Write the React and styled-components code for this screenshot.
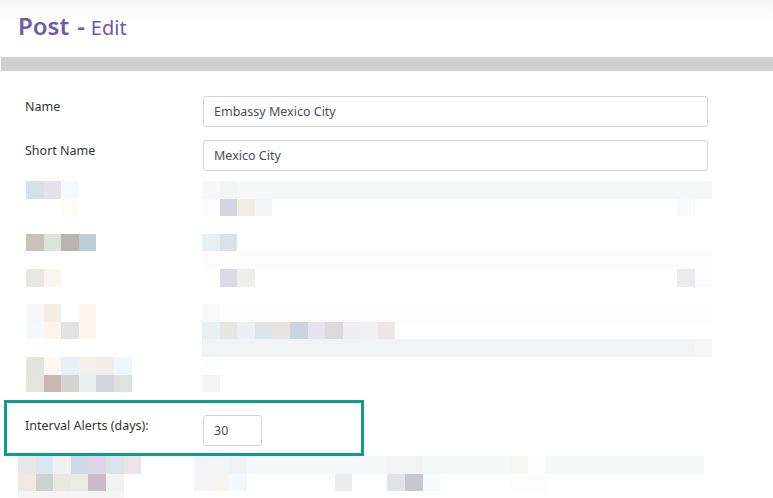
import React from "react";
import styled, { createGlobalStyle } from "styled-components";

const GlobalStyle = createGlobalStyle`
  html, body {
    margin: 0;
    padding: 0;
    background: #fff;
  }
  body {
    font-family: "Noto Sans", "Open Sans", sans-serif;
    color: #333;
  }
`;

const CELL = 17.6;

const Page = styled.div`
  width: 773px;
  height: 498px;
  overflow: hidden;
  background: #fff;
`;

const Header = styled.header`
  height: 57px;
  padding: 0 18px;
  display: flex;
  align-items: flex-start;
  background: linear-gradient(#f6f6f6, #fff 22px);
`;

const Title = styled.h1`
  margin: 10px 0 0;
  display: flex;
  align-items: baseline;
  font-family: "Noto Sans", sans-serif;
  font-size: 24px;
  font-weight: 600;
  line-height: 32px;
  color: #6d5aa8;
`;

const Dash = styled.span`
  margin: 0 6px 0 8px;
`;

const SubTitle = styled.span`
  font-size: 20px;
  font-weight: 400;
`;

const Divider = styled.div`
  height: 14px;
  margin-left: 1px;
  background: #d0d0d0;
`;

const Form = styled.div`
  padding-top: 25px;
  display: flex;
  flex-direction: column;
`;

const FormRow = styled.div`
  display: flex;
  align-items: flex-start;
  padding-left: 25px;
  margin-bottom: ${({ gap }) => gap}px;
`;

const Label = styled.label`
  width: 178px;
  flex-shrink: 0;
  padding-top: 1px;
  font-size: 12.5px;
  line-height: 20px;
  color: #333;
`;

const TextInput = styled.div`
  box-sizing: border-box;
  width: ${({ width }) => width}px;
  height: 31px;
  padding: 0 10px;
  display: flex;
  align-items: center;
  border: 1px solid #cfd3da;
  border-radius: 3px;
  font-size: 12.5px;
  color: #4b4b5c;
  background: #fff;
`;

const Mosaic = styled.div`
  display: grid;
  grid-template-columns: repeat(40, ${CELL}px);
  grid-auto-rows: ${CELL}px;
  margin-left: ${({ left }) => left}px;
  height: ${({ rows }) => rows * CELL}px;
  overflow: hidden;
`;

const Cell = styled.div`
  background: ${({ color }) => color};
`;

const Highlight = styled.div`
  margin: 8px 0 0 4px;
  width: 360px;
  box-sizing: border-box;
  border: 3px solid #119c88;
  padding: 12px 0 7px 18px;
  display: flex;
  align-items: flex-start;
`;

// [row, col, span, color]
const topMosaic = [
  [0, 0, 1, "#d6e0ea"], [0, 1, 1, "#e6e0ea"], [0, 2, 1, "#f5faff"],
  [0, 10, 1, "#f8f8fa"], [0, 11, 1, "#f3f4f6"], [0, 12, 27, "#f7f8fa"],
  [1, 2, 1, "#fffdf8"], [1, 10, 1, "#fcfcfc"], [1, 11, 1, "#d4d4e2"],
  [1, 12, 1, "#f0ede6"], [1, 13, 1, "#f5f5f5"], [1, 37, 1, "#fafafa"],
  [3, 0, 1, "#c8c2bc"], [3, 1, 1, "#dce2dc"], [3, 2, 1, "#bab4b0"], [3, 3, 1, "#bccfd8"],
  [3, 10, 1, "#e6f0f2"], [3, 11, 1, "#dce0e8"],
  [4, 10, 29, "#fcfcfc"],
  [5, 0, 1, "#e8e8e2"], [5, 1, 1, "#f8f6ee"], [5, 11, 1, "#dcdae8"], [5, 12, 1, "#eeefec"],
  [5, 37, 1, "#ebebed"], [5, 38, 1, "#fbfcfb"],
  [7, 0, 1, "#f7f8f7"], [7, 1, 1, "#f4eee6"], [7, 3, 1, "#fff6ee"],
  [7, 10, 1, "#f9f9f9"], [7, 11, 28, "#fcfcfc"],
  [8, 0, 1, "#f5faff"], [8, 1, 1, "#fff4ec"], [8, 2, 1, "#e2e2e2"], [8, 3, 1, "#fff5ee"],
  [8, 10, 1, "#e8f0f4"], [8, 11, 1, "#e8e6e2"], [8, 12, 1, "#ecf0f4"], [8, 13, 1, "#dce6e8"],
  [8, 14, 1, "#e6e4e2"], [8, 15, 1, "#ccd4dc"], [8, 16, 1, "#e6e4f0"], [8, 17, 1, "#dcdadc"],
  [8, 18, 1, "#eeeef2"], [8, 19, 1, "#f0eff2"], [8, 20, 1, "#ece6e6"],
  [9, 10, 28, "#f2f3f5"], [9, 38, 1, "#f6f6f8"],
  [10, 0, 1, "#e4e4de"], [10, 1, 1, "#fdf8f2"], [10, 2, 1, "#e8f0f8"],
  [10, 3, 1, "#f4f0ea"], [10, 4, 1, "#f2eeea"], [10, 5, 1, "#eef6fe"], [10, 10, 1, "#fdfefe"],
  [11, 0, 1, "#e6e4dc"], [11, 1, 1, "#cab6b2"], [11, 2, 1, "#d4d4d2"],
  [11, 3, 1, "#e8f2f0"], [11, 4, 1, "#d4d4e0"], [11, 5, 1, "#e0e2e0"], [11, 10, 1, "#f4f4f4"],
];

const bottomMosaic = [
  [0, 0, 1, "#e8e8ec"], [0, 1, 1, "#dce6ee"], [0, 2, 1, "#eef2f2"], [0, 3, 1, "#d0d8e4"],
  [0, 4, 1, "#dcd6e8"], [0, 5, 1, "#dce2ea"], [0, 6, 1, "#ece4e8"],
  [0, 10, 1, "#f4f4f6"], [0, 11, 1, "#f4f5f7"], [0, 12, 1, "#f2f2f2"], [0, 13, 8, "#f7f8fa"],
  [0, 21, 1, "#f4f4f6"], [0, 22, 1, "#f3f4f6"], [0, 23, 6, "#f7f8fa"], [0, 28, 1, "#f6f6f4"],
  [0, 29, 1, "#fdfdfd"], [0, 30, 9, "#f7f8fa"],
  [1, 0, 1, "#f2e8e6"], [1, 1, 1, "#ccd2d0"], [1, 2, 1, "#e8e8e2"], [1, 3, 1, "#ecece6"],
  [1, 4, 1, "#ccbcc8"], [1, 5, 1, "#f2f2f2"],
  [1, 10, 1, "#f4f4f6"], [1, 11, 1, "#f8f4f2"], [1, 12, 1, "#f4f8fc"], [1, 18, 1, "#ececee"],
  [1, 21, 1, "#e2e3e8"], [1, 22, 1, "#c8c8cc"], [1, 23, 1, "#f6fbff"],
  [1, 28, 1, "#fcfcfc"], [1, 29, 1, "#fcfcfc"],
  [2, 0, 6, "#f6f4f4"],
];

function Pixels({ cells, left, rows }) {
  return (
    <Mosaic left={left} rows={rows}>
      {cells.map(([r, c, span, color], i) => (
        <Cell
          key={i}
          color={color}
          style={{ gridRow: r + 1, gridColumn: `${c + 1} / span ${span}` }}
        />
      ))}
    </Mosaic>
  );
}

export default function App() {
  return (
    <Page>
      <GlobalStyle />
      <Header>
        <Title>
          Post<Dash>-</Dash>
          <SubTitle>Edit</SubTitle>
        </Title>
      </Header>
      <Divider />
      <Form>
        <FormRow gap={13}>
          <Label>Name</Label>
          <TextInput width={505}>Embassy Mexico City</TextInput>
        </FormRow>
        <FormRow gap={10}>
          <Label>Short Name</Label>
          <TextInput width={505}>Mexico City</TextInput>
        </FormRow>
        <Pixels cells={topMosaic} left={26} rows={12} />
        <Highlight>
          <Label>Interval Alerts (days):</Label>
          <TextInput width={59}>30</TextInput>
        </Highlight>
        <Pixels cells={bottomMosaic} left={18} rows={3} />
      </Form>
    </Page>
  );
}
